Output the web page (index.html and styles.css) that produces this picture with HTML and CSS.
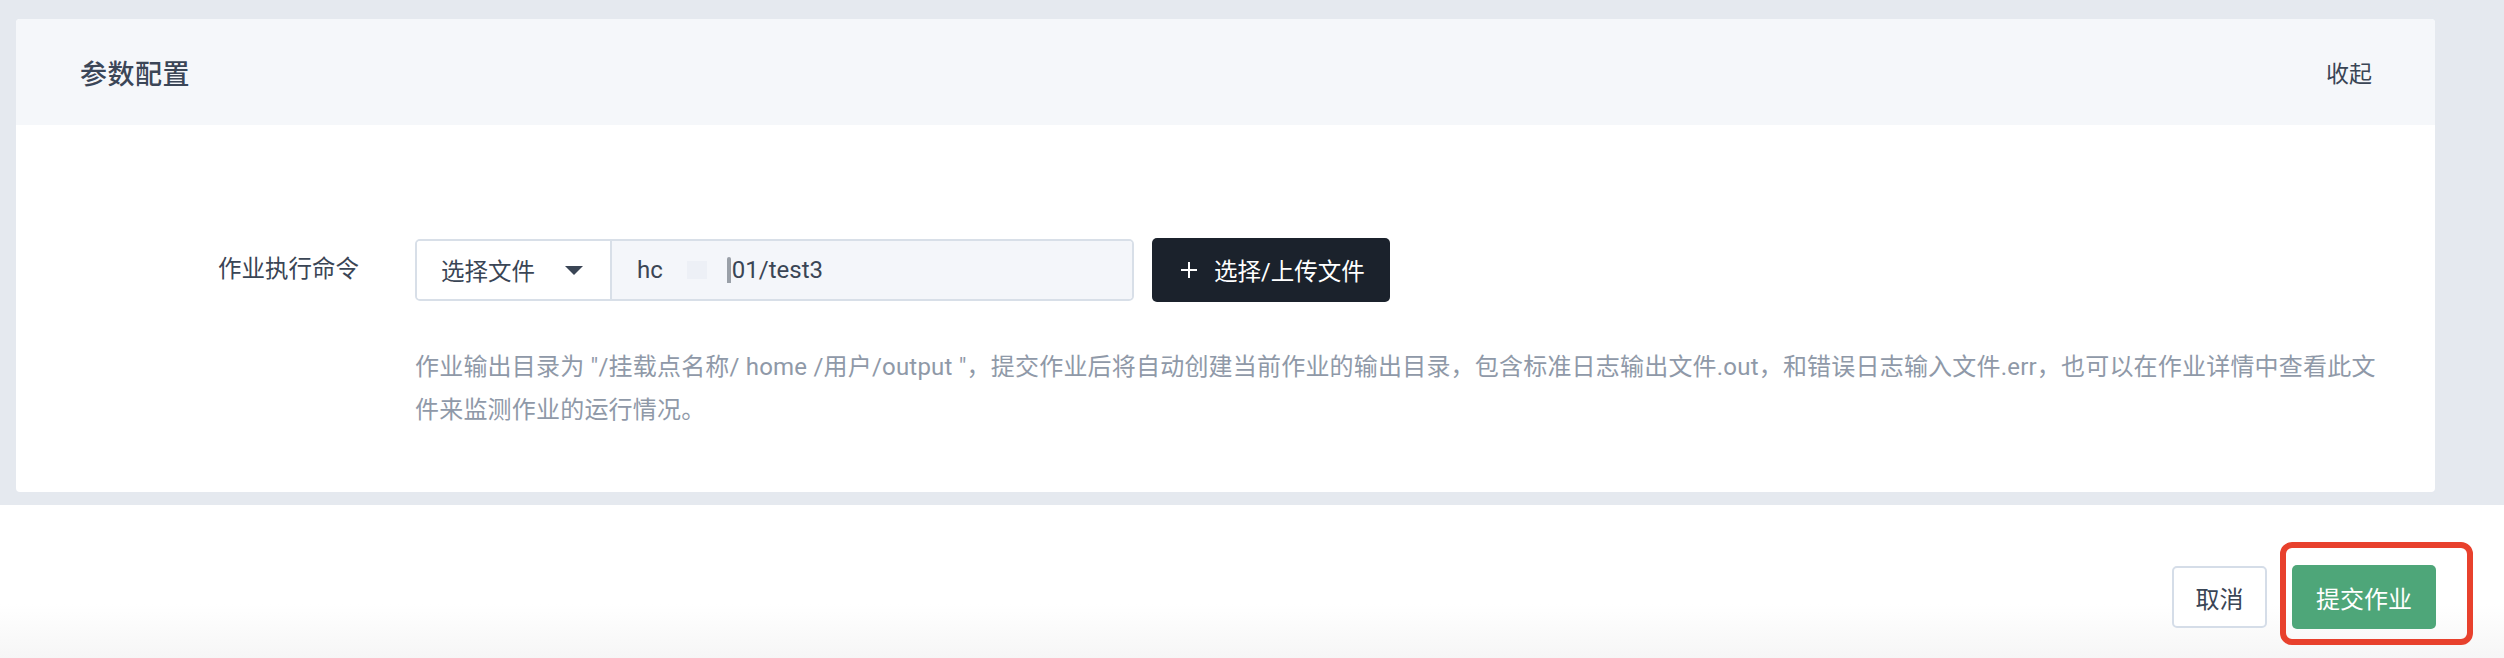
FILE: index.html
```html
<!DOCTYPE html>
<html lang="zh-CN">
<head>
<meta charset="utf-8">
<title>参数配置</title>
<link rel="stylesheet" href="styles.css">
</head>
<body>
<div class="page">
  <main class="content">
    <section class="card">
      <header class="card-head">
        <h2 class="card-title">参数配置</h2>
        <button class="link-btn" type="button">收起</button>
      </header>
      <div class="card-body">
        <div class="form-row">
          <label class="form-label">作业执行命令</label>
          <div class="form-field">
            <div class="cmd-row">
              <div class="input-group">
                <div class="select">
                  <span class="select-text">选择文件</span>
                  <span class="caret"></span>
                </div>
                <div class="path-input">
                  <span>hc</span><span class="redact"></span><span class="cursor"></span><span>01/test3</span>
                </div>
              </div>
              <button class="upload-btn" type="button">
                <svg class="plus" width="18" height="18" viewBox="0 0 18 18"><path d="M9 1v16M1 9h16" stroke="#fff" stroke-width="2" fill="none"/></svg>
                <span>选择/上传文件</span>
              </button>
            </div>
            <p class="help">作业输出目录为 "/挂载点名称/ home /用户/output "，提交作业后将自动创建当前作业的输出目录，包含标准日志输出文件.out，和错误日志输入文件.err，也可以在作业详情中查看此文件来监测作业的运行情况。</p>
          </div>
        </div>
      </div>
    </section>
  </main>
  <footer class="actions">
    <button class="btn btn-default" type="button">取消</button>
    <div class="highlight">
      <button class="btn btn-primary" type="button">提交作业</button>
    </div>
  </footer>
</div>
</body>
</html>
```

FILE: styles.css
```css
* { box-sizing: border-box; }

html, body {
  margin: 0;
  padding: 0;
}

body {
  width: 2504px;
  height: 658px;
  overflow: hidden;
  background: #ffffff;
  font-family: "Roboto", "Noto Sans CJK SC", sans-serif;
  color: #3a4555;
}

.page {
  display: flex;
  flex-direction: column;
  height: 658px;
}

.content {
  background: #e5e9ef;
  padding: 19px 69px 13px 16px;
}

.card {
  background: #ffffff;
  border-radius: 4px;
  overflow: hidden;
}

.card-head {
  height: 106px;
  background: #f5f7fa;
  display: flex;
  align-items: center;
  justify-content: space-between;
  padding: 0 63px 0 64px;
}

.card-title {
  margin: 0;
  font-size: 27px;
  font-weight: 500;
  color: #3b4657;
  letter-spacing: 0.5px;
}

.link-btn {
  border: 0;
  background: transparent;
  padding: 0;
  font-family: inherit;
  font-size: 23px;
  color: #3a4555;
  cursor: pointer;
}

.card-body {
  padding: 113px 40px 60px 143px;
}

.form-row {
  display: flex;
  align-items: flex-start;
  gap: 56px;
}

.form-label {
  width: 200px;
  flex: none;
  text-align: right;
  font-size: 23.5px;
  line-height: 62px;
  color: #3a4555;
}

.form-field {
  width: 1980px;
}

.cmd-row {
  display: flex;
  align-items: center;
  gap: 18px;
}

.input-group {
  display: flex;
  width: 719px;
  height: 62px;
  border: 2px solid #d8dfe8;
  border-radius: 5px;
  overflow: hidden;
}

.select {
  width: 195px;
  flex: none;
  background: #ffffff;
  border-right: 2px solid #d8dfe8;
  display: flex;
  align-items: center;
  justify-content: space-between;
  padding: 0 27px 0 24px;
  font-size: 23.5px;
  color: #3a4555;
}

.caret {
  width: 0;
  height: 0;
  border-left: 9px solid transparent;
  border-right: 9px solid transparent;
  border-top: 9px solid #3a4555;
}

.path-input {
  flex: 1;
  background: #f4f6fa;
  display: flex;
  align-items: center;
  padding: 0 0 0 25px;
  font-size: 24px;
  color: #3a4555;
}

.redact {
  display: inline-block;
  width: 20px;
  height: 18px;
  margin: 0 20px 0 24px;
  background: #edf0f6;
}

.cursor {
  display: inline-block;
  width: 4px;
  height: 26px;
  margin: 0 1px 0 0;
  background: #9aa0a8;
  border-radius: 2px 2px 0 0;
}

.upload-btn {
  width: 238px;
  height: 64px;
  border: 0;
  border-radius: 5px;
  background: #1b222c;
  color: #ffffff;
  display: flex;
  align-items: center;
  gap: 16px;
  padding: 0 0 0 28px;
  font-family: inherit;
  font-size: 23.5px;
  cursor: pointer;
}

.plus { flex: none; }

.help {
  margin: 44px 0 0;
  font-size: 24px;
  letter-spacing: 0.2px;
  line-height: 43px;
  color: #8f99a8;
}

.actions {
  flex: 1;
  display: flex;
  justify-content: flex-end;
  align-items: flex-start;
  gap: 25px;
  padding: 60px 68px 0 0;
  background: linear-gradient(to bottom, #ffffff 0%, #ffffff 65%, #f6f6f6 100%);
}

.btn {
  font-family: inherit;
  font-size: 24px;
  border-radius: 5px;
  cursor: pointer;
}

.btn-default {
  width: 95px;
  height: 62px;
  margin-top: 1px;
  background: #ffffff;
  border: 2px solid #d5dde8;
  color: #3a4555;
}

.highlight {
  position: relative;
}

.highlight::after {
  content: "";
  position: absolute;
  left: -12px;
  top: -23px;
  right: -37px;
  bottom: -16px;
  border: 6px solid #e8412d;
  border-radius: 12px;
  pointer-events: none;
}

.btn-primary {
  width: 144px;
  height: 64px;
  background: #4ea679;
  border: 0;
  color: #ffffff;
  display: block;
}
```
